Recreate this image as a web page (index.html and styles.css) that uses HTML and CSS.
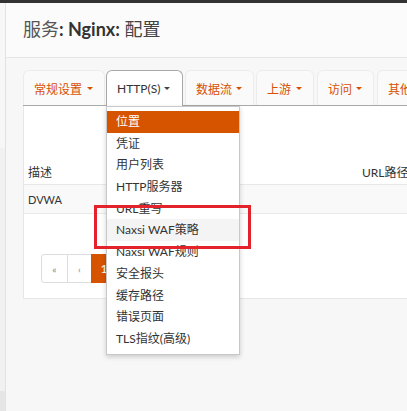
FILE: index.html
```html
<!DOCTYPE html>
<html lang="zh">
<head>
<meta charset="utf-8">
<link rel="stylesheet" href="styles.css">
</head>
<body>
<div class="topbar"></div>
<div class="layout">
  <div class="sidebar">
    <div class="sb-top"></div>
    <div class="sb-mid"></div>
    <div class="sb-bot"></div>
  </div>
  <div class="main">
    <div class="header">
      <h1 class="title"><span class="light">服务</span><b>: Nginx:</b> 配置</h1>
    </div>
    <div class="content">
      <ul class="tabs">
        <li class="tab t1">常规设置<span class="caret"></span></li>
        <li class="tab t2 active">HTTP(S)<span class="caret"></span>
          <ul class="dropdown">
            <li class="item current">位置</li>
            <li class="item">凭证</li>
            <li class="item">用户列表</li>
            <li class="item">HTTP服务器</li>
            <li class="item">URL重写</li>
            <li class="item hover">Naxsi WAF策略</li>
            <li class="item">Naxsi WAF规则</li>
            <li class="item">安全报头</li>
            <li class="item">缓存路径</li>
            <li class="item">错误页面</li>
            <li class="item">TLS指纹(高级)</li>
          </ul>
          <div class="highlight"></div>
        </li>
        <li class="tab t3">数据流<span class="caret"></span></li>
        <li class="tab t4">上游<span class="caret"></span></li>
        <li class="tab t5">访问<span class="caret"></span></li>
        <li class="tab t6">其他<span class="caret"></span></li>
      </ul>
      <div class="panel">
        <div class="thead">
          <div class="c1">描述</div>
          <div class="c2">方式</div>
          <div class="c3">URL路径前缀</div>
        </div>
        <div class="trow">
          <div class="c1">DVWA</div>
        </div>
        <div class="pager">
          <span class="pg">«</span><span class="pg">‹</span><span class="pg on">1</span>
        </div>
      </div>
    </div>
  </div>
</div>
</body>
</html>
```
FILE: styles.css
```css
html, body { margin: 0; padding: 0; }
body {
  background: #f7f7f7;
  font-family: "Lato", "Noto Sans CJK SC", sans-serif;
  font-size: 12px;
  color: #333;
  width: 407px;
  height: 411px;
  overflow: hidden;
}
.topbar { height: 3px; background: #333; }
.layout { display: flex; height: 408px; }
.sidebar {
  width: 5px;
  border-right: 1px solid #e2e2e2;
  display: flex;
  flex-direction: column;
}
.sb-top { height: 145px; background: #f7f7f7; }
.sb-mid { flex: 1; background: #f1f1f1; }
.sb-bot { height: 20px; background: #e6e6e6; }
.main { flex: 1; min-width: 0; overflow: hidden; }
.header {
  height: 54px;
  background: #fbfbfb;
  border-bottom: 1px solid #e6e6e6;
  padding-left: 17px;
  display: flex;
  align-items: center;
}
.title {
  margin: 0;
  font-size: 18px;
  font-weight: normal;
  color: #444;
  white-space: nowrap;
  position: relative;
  top: -2px;
}
.title .light { color: #555; }
.title b { font-weight: bold; color: #333; }
.content { padding: 12px 0 0 17px; }
.tabs {
  list-style: none;
  margin: 0;
  padding: 0;
  display: flex;
  height: 35px;
  border-bottom: 1px solid #a8a8a8;
  white-space: nowrap;
}
.tab {
  position: relative;
  height: 35px;
  box-sizing: border-box;
  background: #fafafa;
  border: 1px solid #ececec;
  border-bottom: none;
  border-radius: 6px 6px 0 0;
  padding: 0 10px;
  display: flex;
  align-items: center;
  color: #d94f00;
  flex-shrink: 0;
}
.t1 { width: 82px; }
.t2 { width: 77px; margin-left: 1px; }
.t3 { width: 69px; margin-left: 2px; }
.t4 { width: 58px; margin-left: 2px; }
.t5 { width: 57px; margin-left: 3px; }
.t6 { width: 60px; margin-left: 3px; }
.tab.active {
  background: #fff;
  border: 1px solid #a8a8a8;
  border-bottom: none;
  height: 36px;
  color: #333;
  margin-bottom: -1px;
  z-index: 2;
}
.caret {
  margin-left: auto;
  width: 0;
  height: 0;
  border-left: 3px solid transparent;
  border-right: 3px solid transparent;
  border-top: 3px solid #d94f00;
  margin-right: 1px;
}
.active .caret { border-top-color: #444; margin-right: 2px; }
.dropdown {
  position: absolute;
  left: -1px;
  top: 35px;
  width: 134px;
  box-sizing: border-box;
  list-style: none;
  margin: 0;
  padding: 4px 0 4px;
  background: #fff;
  border: 1px solid #c8c8c8;
  box-shadow: 0 2px 5px rgba(0,0,0,0.18);
  z-index: 3;
}
.item {
  height: 21.7px;
  line-height: 21.7px;
  padding-left: 9px;
  color: #333;
  font-size: 12px;
}
.item.current { background: #d65400; color: #fff; }
.item.hover { background: #f4f4f4; }
.highlight {
  position: absolute;
  left: -13px;
  top: 134px;
  width: 157px;
  height: 44px;
  box-sizing: border-box;
  border: 3px solid #e3222b;
  z-index: 4;
}
.panel {
  background: #fff;
  border: 1px solid #e6e6e6;
  border-top: none;
  border-right: none;
  height: 193px;
  box-sizing: border-box;
  padding-top: 53px;
  position: relative;
}
.thead, .trow {
  display: flex;
  align-items: center;
  white-space: nowrap;
}
.thead { height: 25px; border-bottom: 1px solid #e8e8e8; font-size: 12px; }
.trow { height: 28px; background: #f9f9f9; border-bottom: 1px solid #e8e8e8; font-size: 11px; }
.c1 { width: 190px; padding-left: 4px; flex-shrink: 0; box-sizing: border-box; }
.c2 { width: 148px; flex-shrink: 0; }
.c3 { flex-shrink: 0; }
.pager {
  display: flex;
  margin: 40px 0 0 17px;
}
.pg {
  width: 25px;
  height: 29px;
  box-sizing: border-box;
  border: 1px solid #ddd;
  margin-left: -1px;
  display: flex;
  align-items: center;
  justify-content: center;
  color: #888;
  font-size: 10px;
  background: #fff;
}
.pg:first-child { margin-left: 0; border-radius: 3px 0 0 3px; width: 27px; }
.pg.on { background: #d65400; border-color: #d65400; color: #fff; font-size: 12px; width: 26px; }
```
